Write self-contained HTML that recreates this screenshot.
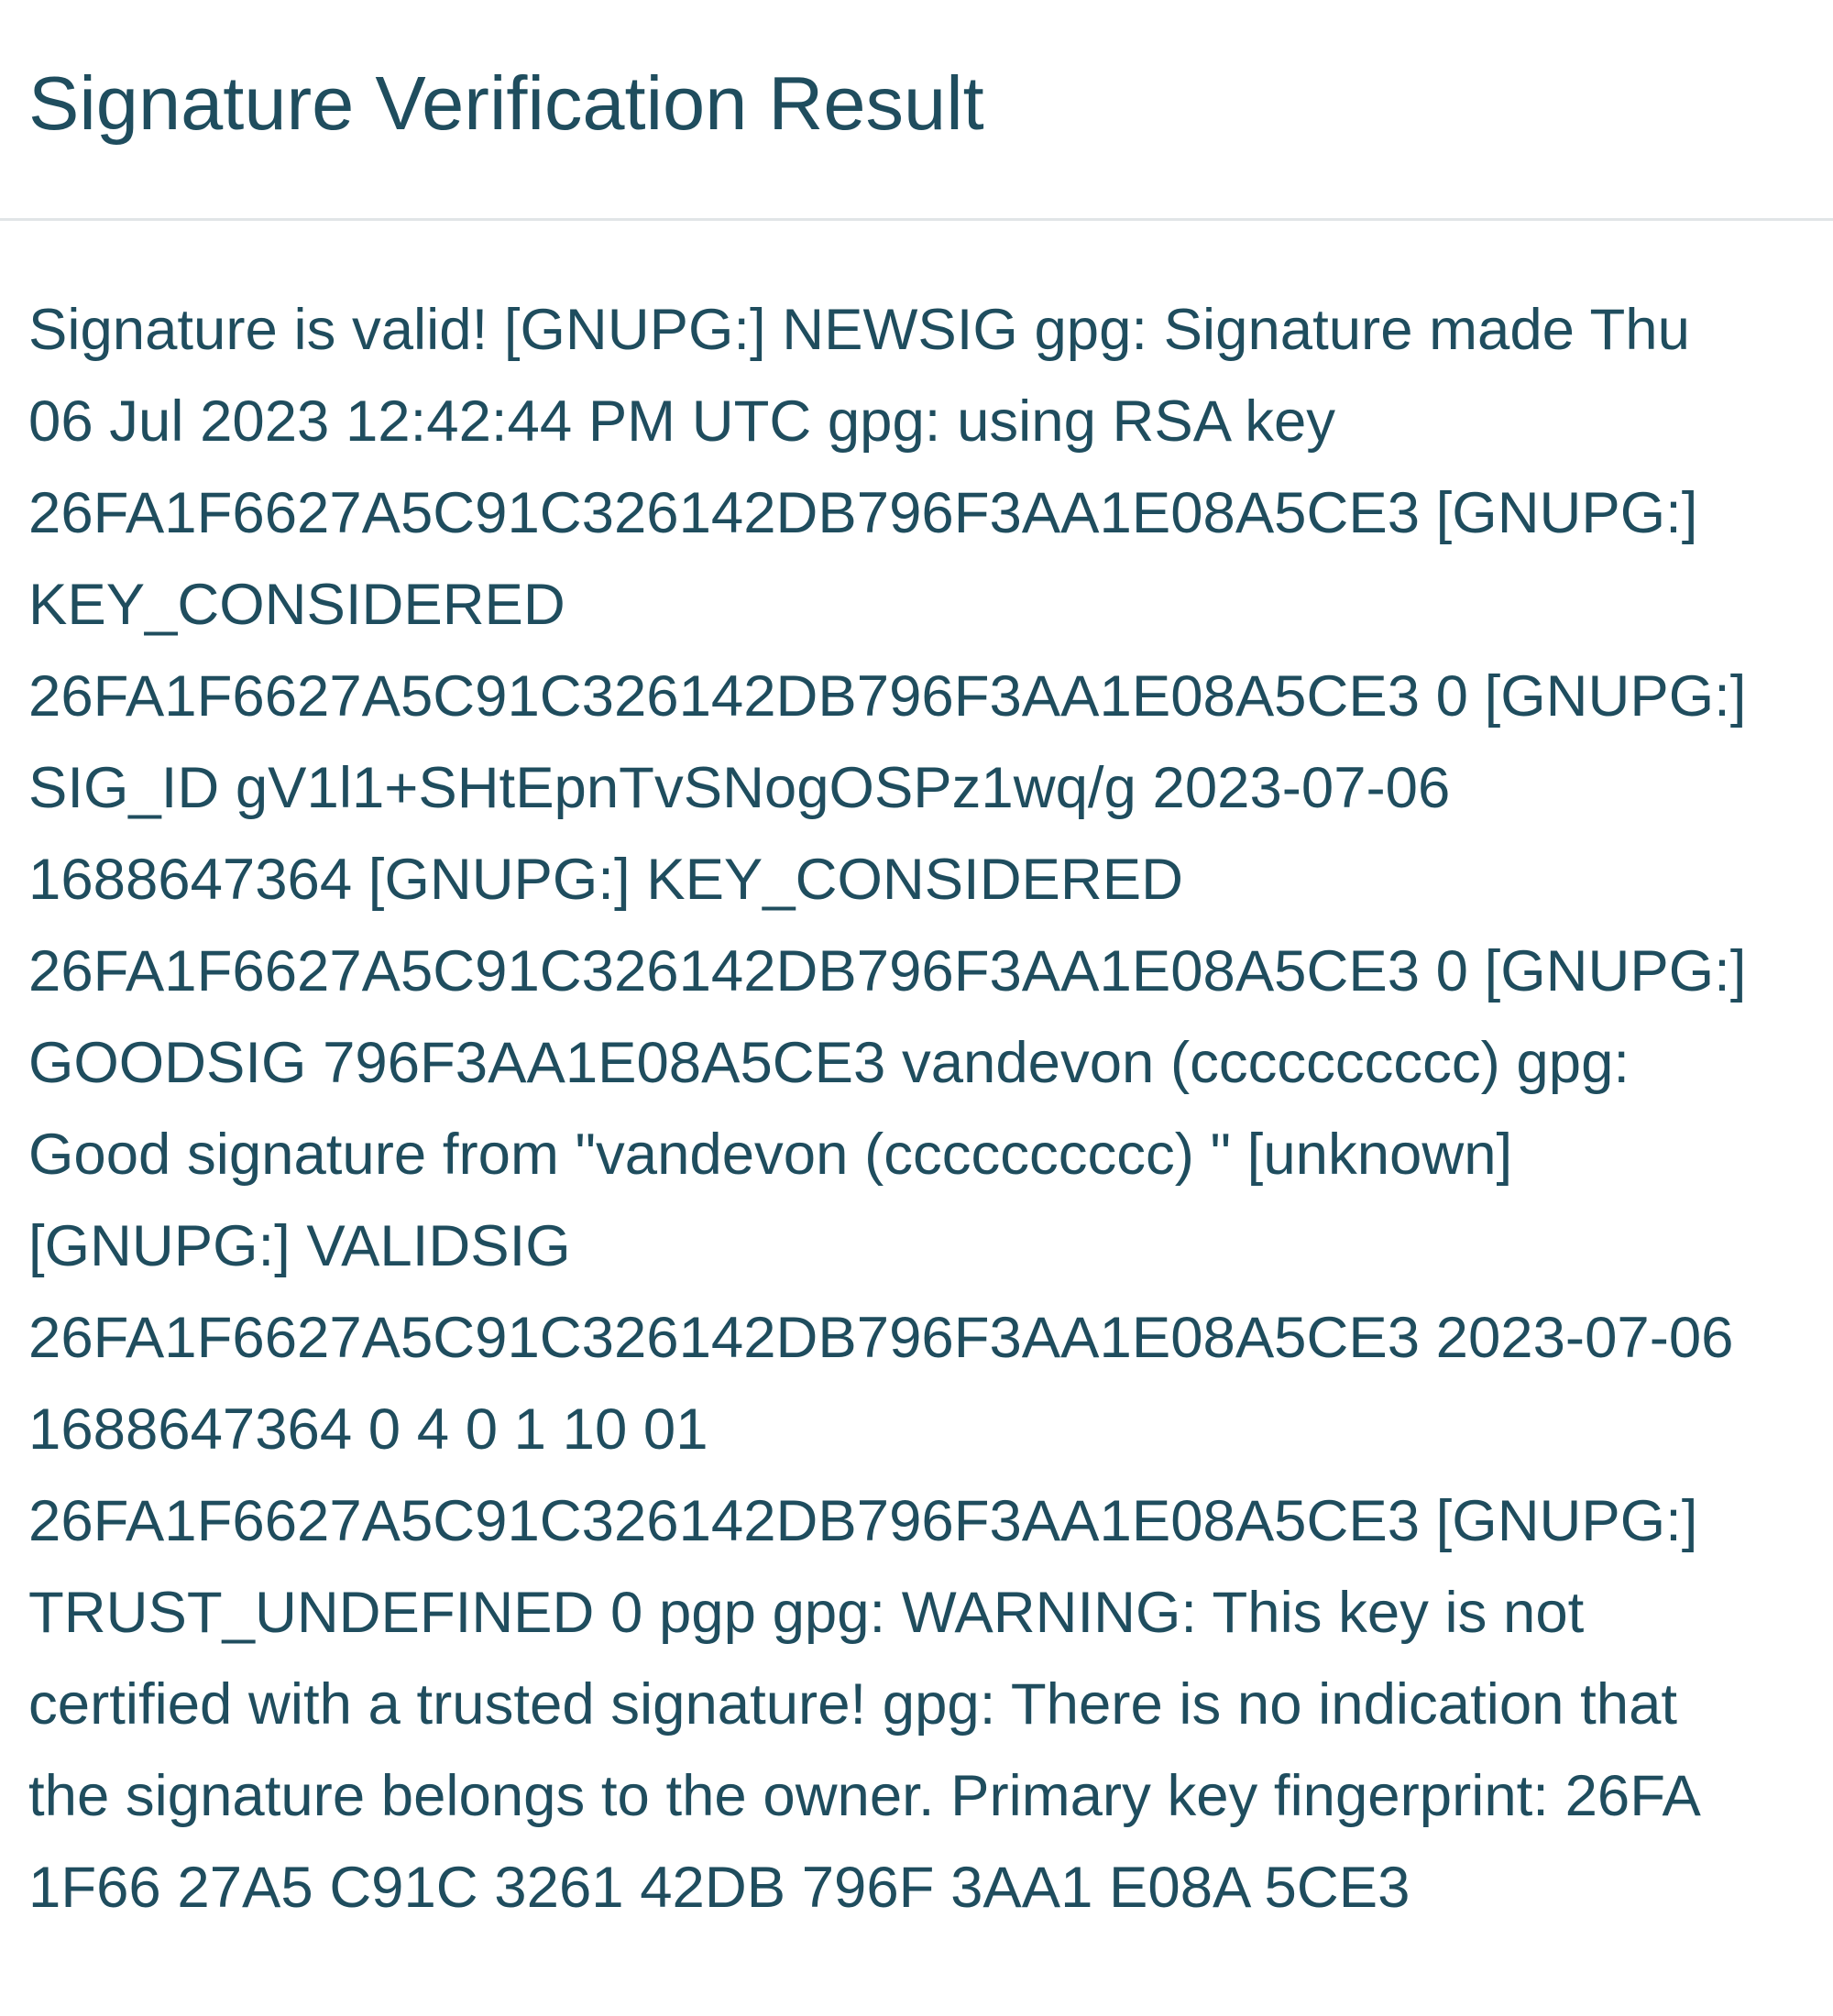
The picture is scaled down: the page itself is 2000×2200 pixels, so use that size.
<!DOCTYPE html>
<html><head><meta charset="utf-8"><style>
html,body{margin:0;padding:0;background:#fff;width:2000px;height:2200px;overflow:hidden}
body{font-family:"Liberation Sans",sans-serif;color:#1f4d5e;position:relative}
.t{position:absolute;left:31px;top:63px;font-size:83px;line-height:100px;white-space:nowrap}
.hr{position:absolute;left:0;top:238px;width:2000px;height:3px;background:#e1e5e7}
.b{position:absolute;left:31px;top:310px;font-size:63.5px;line-height:100px;white-space:nowrap}
</style></head><body>
<div class="t">Signature Verification Result</div>
<div class="hr"></div>
<div class="b">Signature is valid! [GNUPG:] NEWSIG gpg: Signature made Thu<br>
06 Jul 2023 12:42:44 PM UTC gpg: using RSA key<br>
26FA1F6627A5C91C326142DB796F3AA1E08A5CE3 [GNUPG:]<br>
KEY_CONSIDERED<br>
26FA1F6627A5C91C326142DB796F3AA1E08A5CE3 0 [GNUPG:]<br>
SIG_ID gV1l1+SHtEpnTvSNogOSPz1wq/g 2023-07-06<br>
1688647364 [GNUPG:] KEY_CONSIDERED<br>
26FA1F6627A5C91C326142DB796F3AA1E08A5CE3 0 [GNUPG:]<br>
GOODSIG 796F3AA1E08A5CE3 vandevon (cccccccccc) gpg:<br>
Good signature from "vandevon (cccccccccc) " [unknown]<br>
[GNUPG:] VALIDSIG<br>
26FA1F6627A5C91C326142DB796F3AA1E08A5CE3 2023-07-06<br>
1688647364 0 4 0 1 10 01<br>
26FA1F6627A5C91C326142DB796F3AA1E08A5CE3 [GNUPG:]<br>
TRUST_UNDEFINED 0 pgp gpg: WARNING: This key is not<br>
certified with a trusted signature! gpg: There is no indication that<br>
the signature belongs to the owner. Primary key fingerprint: 26FA<br>
1F66 27A5 C91C 3261 42DB 796F 3AA1 E08A 5CE3</div>
</body></html>
